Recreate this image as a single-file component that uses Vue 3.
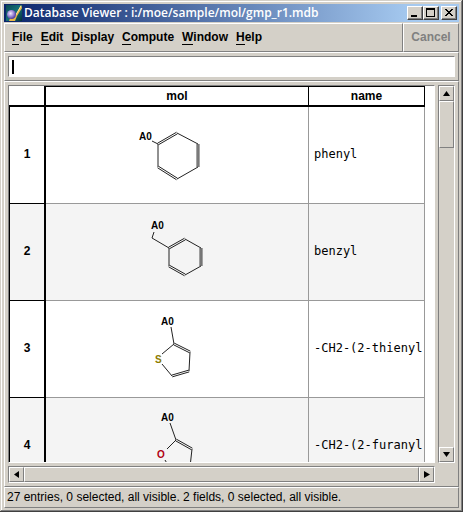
<script setup>
import { ref } from 'vue'

const command = ref('')
const menus = ['File', 'Edit', 'Display', 'Compute', 'Window', 'Help']

// Bond: [x1, y1, x2, y2, order]; atom label: [text, x, baseline, class]
const entries = [
  {
    name: 'phenyl',
    atoms: [['A0', 93, 33, 'port']],
    bonds: [
      [106, 34, 112, 37, 1], [112, 37, 131, 26, 2], [131, 26, 152, 37, 1],
      [152, 37, 152, 60, 2], [152, 60, 131, 72, 1], [131, 72, 112, 60, 2],
      [112, 60, 112, 37, 1],
    ],
  },
  {
    name: 'benzyl',
    atoms: [['A0', 105, 25, 'port']],
    bonds: [
      [108, 28, 106, 34, 1], [106, 34, 123, 44, 1], [123, 44, 139, 35, 2],
      [139, 35, 155, 44, 1], [155, 44, 155, 62, 2], [155, 62, 139, 71, 1],
      [139, 71, 123, 62, 2], [123, 62, 123, 44, 1],
    ],
  },
  {
    name: '-CH2-(2-thienyl',
    atoms: [['A0', 115, 24, 'port'], ['S', 109, 62, 'sulfur']],
    bonds: [
      [125, 26, 128, 43, 1], [128, 43, 144, 51, 2], [144, 51, 143, 70, 1],
      [143, 70, 126, 75, 2], [126, 75, 116, 63, 1], [116, 53, 128, 43, 1],
    ],
  },
  {
    name: '-CH2-(2-furanyl',
    atoms: [['A0', 115, 23, 'port'], ['O', 111, 60, 'oxygen']],
    bonds: [
      [124, 25, 130, 42, 1], [130, 42, 146, 51, 2], [146, 51, 144, 69, 1],
      [144, 69, 126, 74, 2], [126, 74, 119, 62, 1], [121, 51, 130, 42, 1],
    ],
  },
]

function strokes([x1, y1, x2, y2, order]) {
  if (order === 1) return [{ x1, y1, x2, y2 }]
  const length = Math.hypot(x2 - x1, y2 - y1)
  const dx = (y2 - y1) / length
  const dy = (x1 - x2) / length
  return [0.9, -0.9].map((side) => ({
    x1: x1 + side * dx, y1: y1 + side * dy,
    x2: x2 + side * dx, y2: y2 + side * dy,
  }))
}
</script>

<template>
  <div class="window">
    <header class="titlebar">
      <svg class="logo" viewBox="0 0 16 16" aria-hidden="true">
        <defs>
          <radialGradient id="orb" cx="40%" cy="38%" r="65%">
            <stop offset="0" stop-color="#f4ecff" />
            <stop offset="0.5" stop-color="#a08cd8" />
            <stop offset="1" stop-color="#40309c" />
          </radialGradient>
          <linearGradient id="sea" x1="0" y1="0" x2="1" y2="1">
            <stop offset="0" stop-color="#0c4850" />
            <stop offset="0.5" stop-color="#147078" />
            <stop offset="1" stop-color="#063038" />
          </linearGradient>
        </defs>
        <rect width="16" height="16" fill="url(#sea)" />
        <path d="M15 0 L16 3 L11 11 L9 16 L3 16 L4 13 L8 13 Z" fill="#e8b848" />
        <path d="M15 1 L8 13" stroke="#ffe8a0" />
        <circle cx="5.5" cy="9.5" r="4.5" fill="url(#orb)" />
      </svg>
      <h1>Database Viewer : i:/moe/sample/mol/gmp_r1.mdb</h1>
      <div class="controls">
        <button type="button" aria-label="Minimize">
          <svg viewBox="0 0 14 12"><path d="M3 8h6v2H3z" /></svg>
        </button>
        <button type="button" aria-label="Maximize">
          <svg viewBox="0 0 14 12"><path fill-rule="evenodd" d="M2 1h9v9H2zM3 3v6h7V3z" /></svg>
        </button>
        <button type="button" class="close" aria-label="Close">
          <svg viewBox="0 0 14 12" shape-rendering="crispEdges">
            <path d="M3 2h2v1h1v1h2V3h1V2h2v1h-1v1H9v1H8v1h1v1h1v1h1v1H9V8H8V7H6v1H5v1H3V8h1V7h1V6h1V5H5V4H4V3H3z" />
          </svg>
        </button>
      </div>
    </header>

    <div class="menurow">
      <nav class="panel menus">
        <button v-for="menu in menus" :key="menu" type="button"><span>{{ menu[0] }}</span>{{ menu.slice(1) }}</button>
      </nav>
      <div class="panel cancel">
        <button type="button" disabled>Cancel</button>
      </div>
    </div>

    <div class="panel padded">
      <div class="sunken command">
        <span class="caret"></span>
        <input v-model="command" type="text" aria-label="Command" />
      </div>
    </div>

    <main class="panel padded browser">
      <div class="sunken view">
        <table>
          <colgroup>
            <col class="col-index" />
            <col class="col-mol" />
            <col class="col-name" />
          </colgroup>
          <thead>
            <tr>
              <td class="corner"></td>
              <th scope="col">mol</th>
              <th scope="col">name</th>
            </tr>
          </thead>
          <tbody>
            <tr v-for="(entry, i) in entries" :key="entry.name">
              <th scope="row">{{ i + 1 }}</th>
              <td>
                <svg class="molecule" viewBox="0 0 262 96">
                  <template v-for="(bond, b) in entry.bonds" :key="b">
                    <line v-for="(s, k) in strokes(bond)" :key="k" v-bind="s" />
                  </template>
                  <text v-for="[label, x, y, kind] in entry.atoms" :key="label" :x="x" :y="y" :class="kind">{{ label }}</text>
                </svg>
              </td>
              <td class="name">{{ entry.name }}</td>
            </tr>
          </tbody>
        </table>
      </div>

      <div class="sunken scroll vertical">
        <button type="button" aria-label="Scroll up">
          <svg viewBox="0 0 13 13"><path d="M6.500 4L10 9H3z" /></svg>
        </button>
        <div class="track"><div class="thumb"></div></div>
        <button type="button" aria-label="Scroll down">
          <svg viewBox="0 0 13 13"><path d="M3 4h7L6.500 9z" /></svg>
        </button>
      </div>

      <div class="sunken scroll horizontal">
        <button type="button" aria-label="Scroll left">
          <svg viewBox="0 0 13 13"><path d="M4 6.500L9 3v7z" /></svg>
        </button>
        <div class="track"><div class="thumb"></div></div>
        <button type="button" aria-label="Scroll right">
          <svg viewBox="0 0 13 13"><path d="M4 3l6 3.500L4 10z" /></svg>
        </button>
      </div>
    </main>

    <footer class="panel status">27 entries, 0 selected, all visible. 2 fields, 0 selected, all visible.</footer>
  </div>
</template>

<style>
body {
  margin: 0;
  background: #d4d0c8;
}
</style>

<style scoped>
.window,
.window * {
  box-sizing: border-box;
}

.window {
  display: flex;
  flex-direction: column;
  height: 100vh;
  padding: 4px;
  background: #d4d0c8;
  box-shadow: inset -1px -1px #404040, inset 1px 1px #d4d0c8,
    inset -2px -2px #808080, inset 2px 2px #fff;
  color: #000;
  font: 12px/14px "Liberation Sans", Arial, sans-serif;
}

button {
  margin: 0;
  padding: 0;
  border: 0;
  background: none;
  color: inherit;
  font: inherit;
}

.titlebar {
  display: flex;
  flex: none;
  align-items: center;
  height: 18px;
  margin-bottom: 1px;
  padding: 0 2px;
  background: linear-gradient(to right, #0a246a, #a6caf0 90%);
}

.logo {
  flex: none;
  width: 16px;
  height: 16px;
}

h1 {
  flex: 1;
  min-width: 0;
  margin: 0;
  padding-left: 2px;
  overflow: hidden;
  color: #fff;
  font: 600 12px/16px "Open Sans", sans-serif;
  white-space: nowrap;
}

.controls {
  display: flex;
}

.controls button {
  width: 16px;
  height: 14px;
  border: 1px solid;
  border-color: #fff #404040 #404040 #fff;
  background: #d4d0c8;
  box-shadow: inset -1px -1px #808080;
}

.controls .close {
  margin-left: 2px;
}

button svg {
  display: block;
  width: 100%;
  height: 100%;
}

.panel {
  border: 1px solid;
  border-color: #fff #808080 #808080 #fff;
}

.padded {
  padding: 3px;
}

.sunken {
  border: 1px solid;
  border-color: #808080 #fff #fff #808080;
}

.menurow {
  display: flex;
  flex: none;
  height: 29px;
  font-weight: bold;
}

.menus {
  display: flex;
  flex: 1;
  gap: 8px;
  align-items: center;
  padding-left: 7px;
  padding-bottom: 1px;
}

.menus span {
  border-bottom: 1px solid #000;
}

.cancel {
  display: flex;
  align-items: center;
  justify-content: center;
  width: 56px;
  padding-bottom: 1px;
}

.cancel button {
  color: #808080;
}

.command {
  display: flex;
  align-items: center;
  height: 21px;
  padding: 0 3px;
  background: #fff;
}

.caret {
  width: 2px;
  height: 14px;
  background: #000;
}

.command input {
  flex: 1;
  min-width: 0;
  height: 100%;
  padding: 0 2px;
  border: 0;
  outline: 0;
  background: none;
  font: inherit;
}

.browser {
  display: grid;
  flex: 1;
  grid-template: minmax(0, 1fr) 17px / minmax(0, 1fr) 17px;
  gap: 3px;
  min-height: 0;
}

.view {
  overflow: hidden;
  background: #fff;
}

table {
  width: 416px;
  table-layout: fixed;
  border-collapse: separate;
  border-spacing: 0;
}

.col-index {
  width: 37px;
}

.col-mol {
  width: 263px;
}

.col-name {
  width: 116px;
}

td,
th {
  padding: 0;
  border: 0 solid #999;
}

thead th {
  height: 21px;
  border-color: #000;
  border-width: 1px 1px 2px 0;
}

.corner {
  border-color: #000;
  border-width: 0 2px 2px 0;
}

tbody th {
  padding-bottom: 2px;
  border-color: #000;
  border-width: 0 2px 1px 1px;
}

tbody td {
  height: 97px;
  border-width: 0 1px 1px 0;
}

tbody tr:nth-child(even) {
  background: #f4f4f4;
}

.name {
  padding: 0 0 2px 5px;
  overflow: hidden;
  font-family: "DejaVu Sans Mono", monospace;
  font-size: 12px;
  white-space: nowrap;
}

.molecule {
  display: block;
  width: 262px;
  height: 96px;
}

.molecule line {
  stroke: #222;
  stroke-width: 1;
}

.molecule text {
  font-size: 10px;
}

.port {
  font-weight: bold;
}

.sulfur {
  fill: #8c7c00;
  font-weight: bold;
}

.oxygen {
  fill: #b00010;
  font-weight: bold;
}

.scroll {
  display: flex;
}

.vertical {
  flex-direction: column;
}

.scroll button {
  flex: none;
  width: 15px;
  height: 15px;
}

.scroll button,
.thumb {
  border: 1px solid;
  border-color: #fff #808080 #808080 #fff;
  background: #d4d0c8;
}

.track {
  flex: 1;
}

.vertical .thumb {
  height: 47px;
}

.horizontal .thumb {
  height: 100%;
}

.status {
  flex: none;
  height: 21px;
  padding: 2px;
  line-height: 15px;
  white-space: nowrap;
}
</style>
